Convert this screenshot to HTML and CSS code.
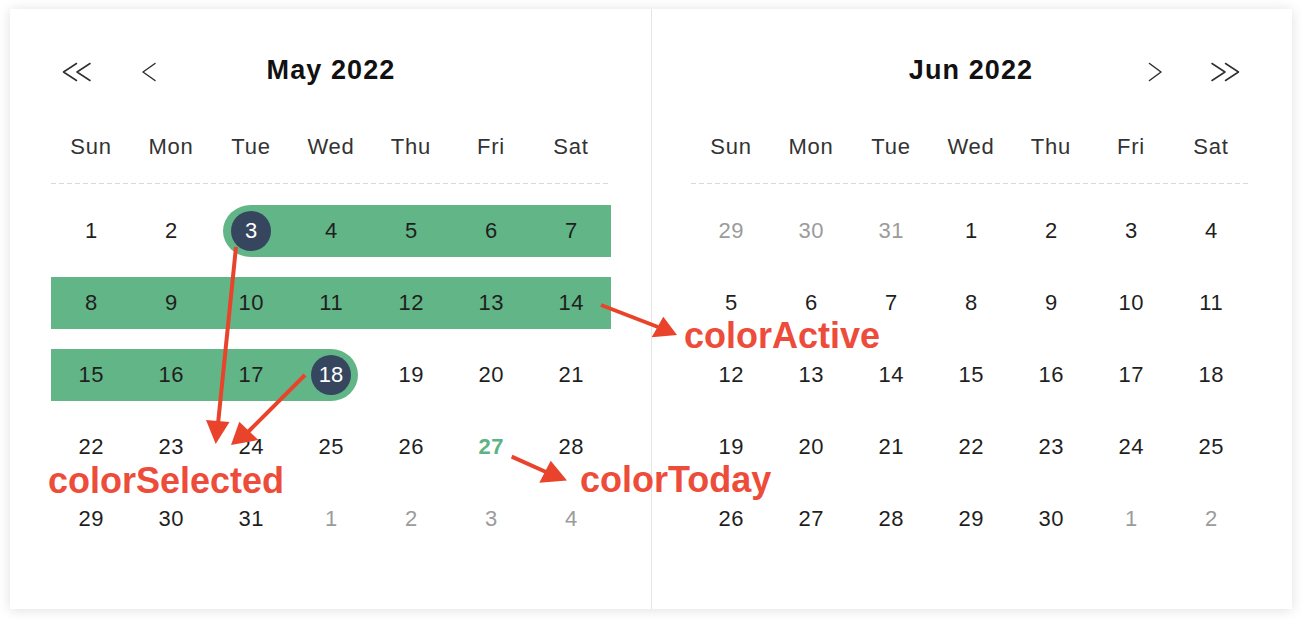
FILE: index.html
```html
<!DOCTYPE html>
<html lang="en">
<head>
<meta charset="utf-8">
<title>Range calendar</title>
<link rel="stylesheet" href="styles.css">
</head>
<body>
<div class="card">
  <section class="panel panel-left">
    <header class="head">
      <div class="nav nav-left">
        <svg class="ico ico-dbl" width="30" height="20" viewBox="0 0 30 20"><polyline points="14.5,1.5 1.5,10 14.5,18.5"/><polyline points="28,1.5 15,10 28,18.5"/></svg>
        <svg class="ico ico-sgl" width="14" height="20" viewBox="0 0 14 20"><polyline points="13,1.5 1,10 13,18.5"/></svg>
      </div>
      <h2 class="title">May 2022</h2>
      <div class="nav nav-right"></div>
    </header>
    <div class="weekdays"><span>Sun</span><span>Mon</span><span>Tue</span><span>Wed</span><span>Thu</span><span>Fri</span><span>Sat</span></div>
    <div class="rule"></div>
    <div class="days">
      <div class="cell"><span class="num">1</span></div>
      <div class="cell"><span class="num">2</span></div>
      <div class="cell start"><span class="band"></span><span class="num sel">3</span></div>
      <div class="cell range"><span class="band"></span><span class="num">4</span></div>
      <div class="cell range"><span class="band"></span><span class="num">5</span></div>
      <div class="cell range"><span class="band"></span><span class="num">6</span></div>
      <div class="cell range"><span class="band"></span><span class="num">7</span></div>

      <div class="cell range"><span class="band"></span><span class="num">8</span></div>
      <div class="cell range"><span class="band"></span><span class="num">9</span></div>
      <div class="cell range"><span class="band"></span><span class="num">10</span></div>
      <div class="cell range"><span class="band"></span><span class="num">11</span></div>
      <div class="cell range"><span class="band"></span><span class="num">12</span></div>
      <div class="cell range"><span class="band"></span><span class="num">13</span></div>
      <div class="cell range"><span class="band"></span><span class="num">14</span></div>

      <div class="cell range"><span class="band"></span><span class="num">15</span></div>
      <div class="cell range"><span class="band"></span><span class="num">16</span></div>
      <div class="cell range"><span class="band"></span><span class="num">17</span></div>
      <div class="cell end"><span class="band"></span><span class="num sel">18</span></div>
      <div class="cell"><span class="num">19</span></div>
      <div class="cell"><span class="num">20</span></div>
      <div class="cell"><span class="num">21</span></div>

      <div class="cell"><span class="num">22</span></div>
      <div class="cell"><span class="num">23</span></div>
      <div class="cell"><span class="num">24</span></div>
      <div class="cell"><span class="num">25</span></div>
      <div class="cell"><span class="num">26</span></div>
      <div class="cell"><span class="num today">27</span></div>
      <div class="cell"><span class="num">28</span></div>

      <div class="cell"><span class="num">29</span></div>
      <div class="cell"><span class="num">30</span></div>
      <div class="cell"><span class="num">31</span></div>
      <div class="cell"><span class="num muted">1</span></div>
      <div class="cell"><span class="num muted">2</span></div>
      <div class="cell"><span class="num muted">3</span></div>
      <div class="cell"><span class="num muted">4</span></div>
    </div>
  </section>

  <section class="panel panel-right">
    <header class="head">
      <div class="nav nav-left"></div>
      <h2 class="title">Jun 2022</h2>
      <div class="nav nav-right">
        <svg class="ico ico-sgl" width="14" height="20" viewBox="0 0 14 20"><polyline points="1.5,1.5 13,10 1.5,18.5"/></svg>
        <svg class="ico ico-dbl" width="30" height="20" viewBox="0 0 30 20"><polyline points="2,1.5 15,10 2,18.5"/><polyline points="15.5,1.5 28.5,10 15.5,18.5"/></svg>
      </div>
    </header>
    <div class="weekdays"><span>Sun</span><span>Mon</span><span>Tue</span><span>Wed</span><span>Thu</span><span>Fri</span><span>Sat</span></div>
    <div class="rule"></div>
    <div class="days">
      <div class="cell"><span class="num muted">29</span></div>
      <div class="cell"><span class="num muted">30</span></div>
      <div class="cell"><span class="num muted">31</span></div>
      <div class="cell"><span class="num">1</span></div>
      <div class="cell"><span class="num">2</span></div>
      <div class="cell"><span class="num">3</span></div>
      <div class="cell"><span class="num">4</span></div>

      <div class="cell"><span class="num">5</span></div>
      <div class="cell"><span class="num">6</span></div>
      <div class="cell"><span class="num">7</span></div>
      <div class="cell"><span class="num">8</span></div>
      <div class="cell"><span class="num">9</span></div>
      <div class="cell"><span class="num">10</span></div>
      <div class="cell"><span class="num">11</span></div>

      <div class="cell"><span class="num">12</span></div>
      <div class="cell"><span class="num">13</span></div>
      <div class="cell"><span class="num">14</span></div>
      <div class="cell"><span class="num">15</span></div>
      <div class="cell"><span class="num">16</span></div>
      <div class="cell"><span class="num">17</span></div>
      <div class="cell"><span class="num">18</span></div>

      <div class="cell"><span class="num">19</span></div>
      <div class="cell"><span class="num">20</span></div>
      <div class="cell"><span class="num">21</span></div>
      <div class="cell"><span class="num">22</span></div>
      <div class="cell"><span class="num">23</span></div>
      <div class="cell"><span class="num">24</span></div>
      <div class="cell"><span class="num">25</span></div>

      <div class="cell"><span class="num">26</span></div>
      <div class="cell"><span class="num">27</span></div>
      <div class="cell"><span class="num">28</span></div>
      <div class="cell"><span class="num">29</span></div>
      <div class="cell"><span class="num">30</span></div>
      <div class="cell"><span class="num muted">1</span></div>
      <div class="cell"><span class="num muted">2</span></div>
    </div>
  </section>
</div>

<svg class="arrows" width="1302" height="620" viewBox="0 0 1302 620">
  <line x1="236" y1="247" x2="218" y2="424"/>
  <polygon points="206,420 229.5,422 215.7,444"/>
  <line x1="305" y1="375" x2="248" y2="432"/>
  <polygon points="239.3,421.7 258.3,440 231,445"/>
  <line x1="601" y1="305" x2="658" y2="327"/>
  <polygon points="651.7,337.3 663.3,316.7 677,335"/>
  <line x1="511.7" y1="456.7" x2="546" y2="472"/>
  <polygon points="539.3,482.7 550.7,460.7 567,480.5"/>
</svg>
<div class="note note-active">colorActive</div>
<div class="note note-selected">colorSelected</div>
<div class="note note-today">colorToday</div>
</body>
</html>
```
FILE: styles.css
```css
html, body {
  margin: 0;
  padding: 0;
  background: #ffffff;
}

body {
  font-family: "Liberation Sans", Arial, "Helvetica Neue", sans-serif;
  color: #1f1f1f;
  min-height: 620px;
}

.card {
  margin: 9px 0 0 10px;
  width: 1282px;
  height: 600px;
  display: flex;
  background: #ffffff;
  box-shadow: 0 1px 12px rgba(0, 0, 0, 0.13);
}

.panel {
  box-sizing: border-box;
  padding-top: 41px;
}

.panel-left {
  padding-left: 41px;
  padding-right: 40px;
  border-right: 1px solid #e4e4e4;
}

.panel-right {
  padding-left: 39px;
  padding-right: 41px;
}

.head {
  display: grid;
  grid-template-columns: 1fr auto 1fr;
  align-items: center;
  height: 40px;
  width: 560px;
}

.title {
  margin: 0;
  font-size: 27px;
  line-height: 40px;
  font-weight: 700;
  color: #111111;
  letter-spacing: 1.1px;
}

.nav {
  display: flex;
  align-items: center;
  padding-top: 4px;
}

.nav-left {
  padding-left: 11px;
  gap: 50px;
}

.nav-right {
  justify-content: flex-end;
  padding-right: 11px;
  gap: 48px;
}

.ico {
  display: block;
  fill: none;
  stroke: #2f2f2f;
  stroke-width: 1.5;
  stroke-linecap: round;
  stroke-linejoin: round;
}

.weekdays {
  display: grid;
  grid-template-columns: repeat(7, 80px);
  margin-top: 33px;
  height: 48px;
  line-height: 48px;
  font-size: 22px;
  color: #333333;
  text-align: center;
  letter-spacing: 0.8px;
}

.rule {
  margin-top: 12px;
  width: 560px;
  height: 1px;
  background: repeating-linear-gradient(90deg, #d8d8d8 0 5px, transparent 5px 8px);
}

.days {
  margin-top: 11px;
  display: grid;
  grid-template-columns: repeat(7, 80px);
  grid-auto-rows: 72px;
}

.cell {
  display: grid;
  align-items: center;
  justify-items: center;
}

.band {
  grid-area: 1 / 1;
  justify-self: stretch;
  height: 52px;
  background: #62b587;
}

.start .band {
  margin-left: 12px;
  border-radius: 28px 0 0 28px / 26px 0 0 26px;
}

.end .band {
  margin-right: 13px;
  border-radius: 0 27px 27px 0 / 0 26px 26px 0;
}

.num {
  grid-area: 1 / 1;
  font-size: 22px;
  line-height: 22px;
  letter-spacing: 0.6px;
  text-indent: 0.6px;
  color: #1f1f1f;
}

.num.sel {
  width: 40px;
  height: 40px;
  border-radius: 50%;
  background: #36465e;
  color: #ffffff;
  display: grid;
  place-items: center;
  letter-spacing: 0;
  text-indent: 0;
}

.num.today {
  color: #5db383;
  font-weight: 700;
}

.num.muted {
  color: #9b9b9b;
}

.arrows {
  position: absolute;
  left: 0;
  top: 0;
  pointer-events: none;
}

.arrows line {
  stroke: #e9432b;
  stroke-width: 4;
  stroke-linecap: butt;
}

.arrows polygon {
  fill: #e9432b;
}

.note {
  position: absolute;
  font-size: 36px;
  line-height: 36px;
  font-weight: 700;
  color: #ee4c3b;
  white-space: nowrap;
}

.note-active {
  left: 684px;
  top: 318px;
}

.note-selected {
  left: 48px;
  top: 463px;
}

.note-today {
  left: 580px;
  top: 462px;
}
```
